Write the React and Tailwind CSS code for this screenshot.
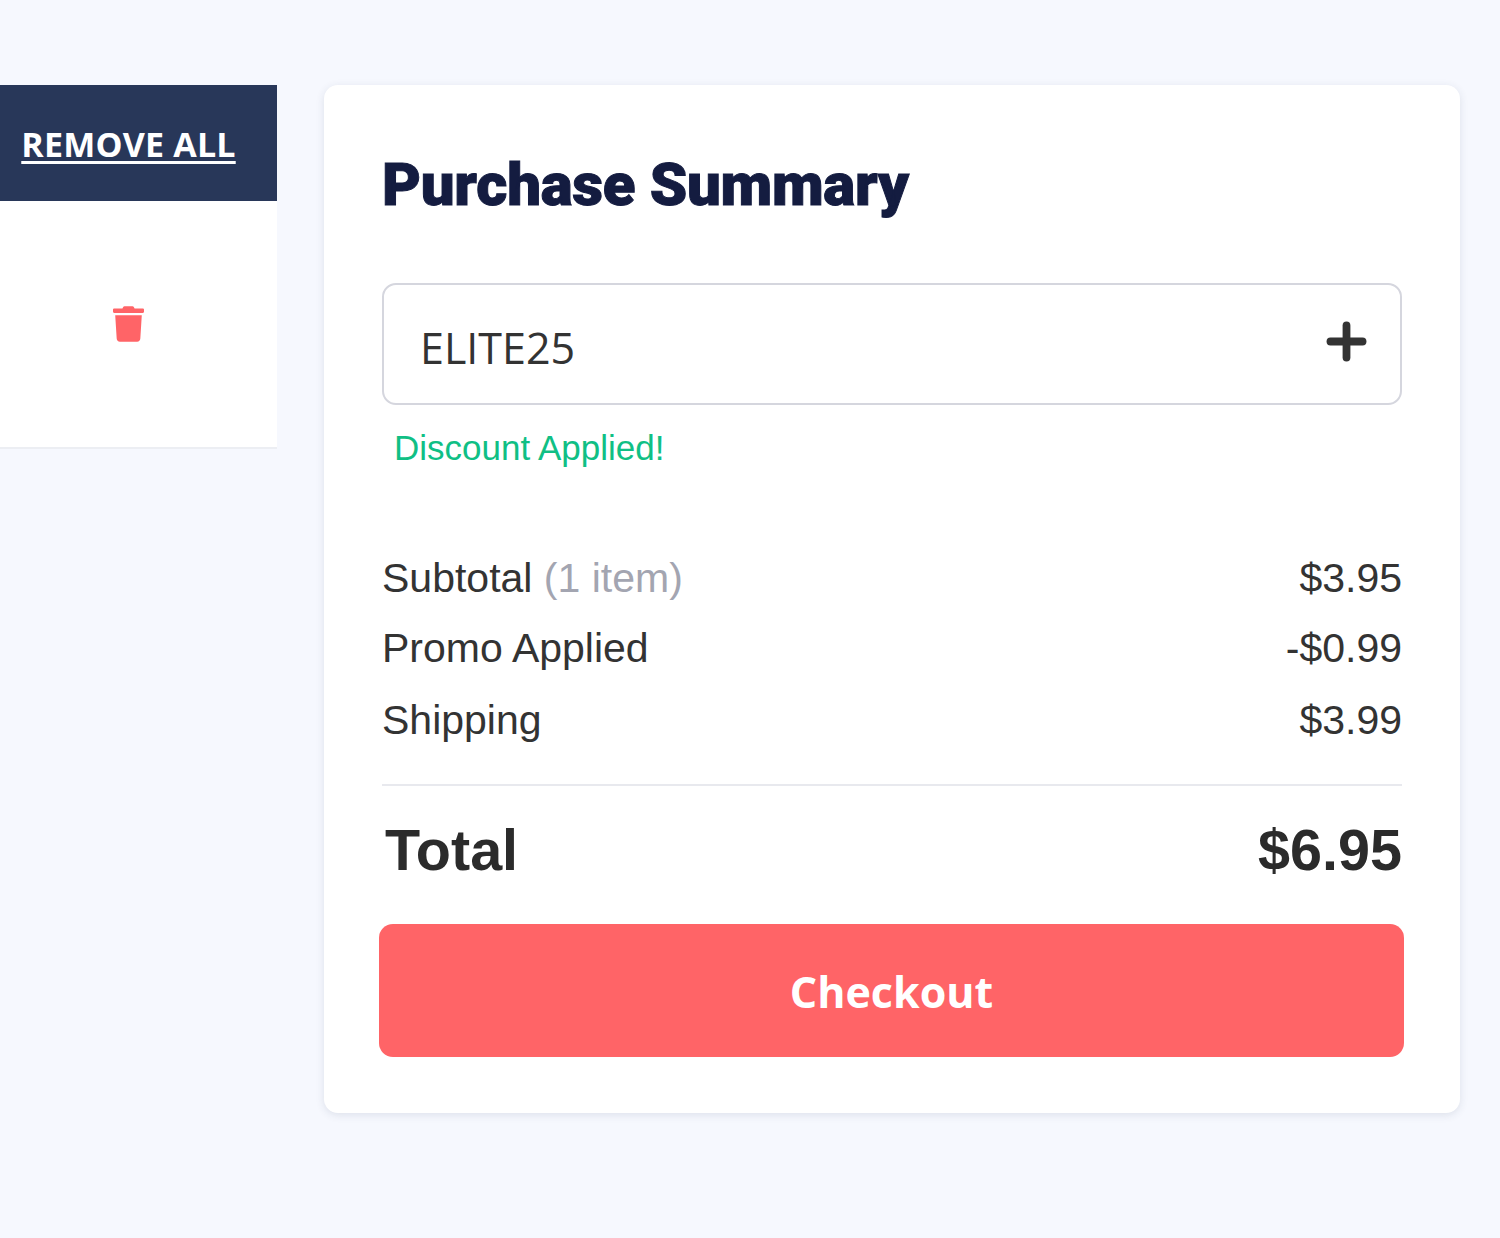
import { Plus } from 'lucide-react'
import { FaTrash } from 'react-icons/fa'

const rows = [
  { label: 'Subtotal', note: '(1 item)', value: '$3.95', height: 'h-[70px]' },
  { label: 'Promo Applied', value: '-$0.99', height: 'h-[70px]' },
  { label: 'Shipping', value: '$3.99', height: 'h-[74px]' },
]

export default function App() {
  return (
    <div className="min-h-[1238px] bg-[#f6f8fe] pt-[85px] flex items-start font-['Liberation_Sans',sans-serif]">
      {/* Cart table, cut off on the left */}
      <div className="w-[277px] shrink-0">
        <div className="h-[116px] bg-[#283759] flex items-center justify-center pr-5 pt-[2px]">
          <span className="text-[34px] font-bold text-white underline underline-offset-4 font-['Open_Sans',sans-serif] tracking-[0.2px]">REMOVE ALL</span>
        </div>
        <div className="h-[248px] bg-white border-b-2 border-[#eceef3] flex justify-center pt-[105px] pr-5">
          <FaTrash className="w-[31px] h-[36px] text-[#ff6467]" />
        </div>
      </div>

      {/* Purchase summary */}
      <div className="ml-[47px] w-[1136px] h-[1028px] bg-white rounded-[14px] shadow-[0_2px_8px_rgba(40,55,89,0.12)] pt-[64px] pl-[58px] pr-[58px]">
        <h2 className="text-[60px] leading-[72px] font-black text-[#141c40] font-['Roboto',sans-serif] tracking-[-0.3px] [-webkit-text-stroke:1px_#141c40]">Purchase Summary</h2>

        <div className="mt-[62px] h-[122px] border-2 border-[#d5d6de] rounded-[14px] flex items-center justify-between pl-[36px] pr-[26px]">
          <span className="text-[43px] text-[#333] font-['Open_Sans',sans-serif] mt-[8px]">ELITE25</span>
          <Plus className="w-[55px] h-[55px] text-[#333] -mt-[6px]" strokeWidth={3.4} />
        </div>
        <p className="mt-[21px] ml-[12px] text-[35px] leading-[44px] text-[#10bf85]">Discount Applied!</p>

        <div className="mt-[74px]">
          {rows.map(row => (
            <div key={row.label} className={`${row.height} flex justify-between items-center text-[41px] text-[#333]`}>
              <span>
                {row.label} {row.note && <span className="text-[#a3a5b1]">{row.note}</span>}
              </span>
              <span>{row.value}</span>
            </div>
          ))}
        </div>

        <div className="mt-[26px] border-t-2 border-[#e8e9ee] pt-[26px] flex justify-between text-[57.5px] leading-[76px] font-bold text-[#2b2b2b]">
          <span className="ml-[3px]">Total</span>
          <span>$6.95</span>
        </div>

        <button className="mt-[36px] -ml-[3px] w-[1025px] h-[133px] pt-[3px] rounded-[14px] bg-[#ff6467] text-white text-[43px] font-bold font-['Open_Sans',sans-serif]">
          Checkout
        </button>
      </div>
    </div>
  )
}
